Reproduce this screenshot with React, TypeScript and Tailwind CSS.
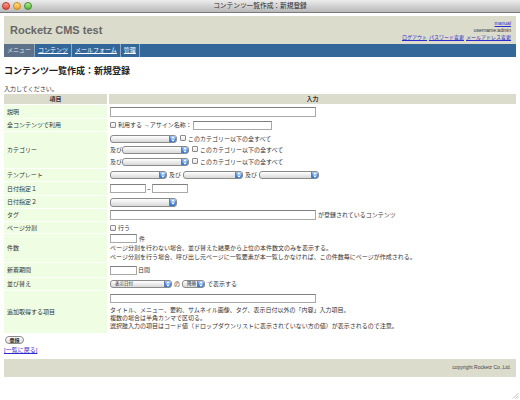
import React from "react";

const jp = "font-['Liberation_Sans','Noto_Sans_CJK_JP',sans-serif]";

function Arrows() {
  return (
    <svg width="4" height="6" viewBox="0 0 4 6">
      <path d="M0 2.4 L2 0.3 L4 2.4 Z M0 3.6 L2 5.7 L4 3.6 Z" fill="#fff" />
    </svg>
  );
}

function Select({ className, label }: { className: string; label?: string }) {
  return (
    <span
      className={`inline-flex h-[8px] items-stretch overflow-hidden rounded-[3px] border border-[#8a8a8a] bg-gradient-to-b from-white to-[#d8d8d8] ${className}`}
    >
      <span className="flex flex-1 items-center pl-[4px] text-[4.5px] leading-none text-[#222]">{label}</span>
      <span className="flex w-[7px] items-center justify-center border-l border-[#5a7fb8] bg-gradient-to-b from-[#a9cdf7] via-[#4b8be0] to-[#2d6fd2]">
        <Arrows />
      </span>
    </span>
  );
}

function Check() {
  return (
    <span className="inline-block h-[6px] w-[6px] rounded-[1px] border border-[#8a8a8a] bg-gradient-to-b from-white to-[#e4e4e4]" />
  );
}

function Input({ className }: { className: string }) {
  return (
    <span
      className={`inline-block border border-[#a8a8a8] border-t-[#7e7e7e] bg-white ${className}`}
    />
  );
}

function Row({ label, h, children }: { label: string; h: string; children: React.ReactNode }) {
  return (
    <>
      <div className={`flex items-center bg-[#effde3] pl-[3px] text-[#333] ${h}`}>{label}</div>
      <div className={`flex items-center bg-white pl-[1px] ${h}`}>{children}</div>
    </>
  );
}

function CatLine({ first }: { first?: boolean }) {
  return (
    <div className="flex h-[11.5px] items-center">
      {!first && <span className="w-[12px]">及び</span>}
      <Select className="w-[67px]" />
      <span className="ml-[3px]">
        <Check />
      </span>
      <span className="ml-[2px]">このカテゴリー以下の全すべて</span>
    </div>
  );
}

export default function App() {
  return (
    <div className={`relative h-[400px] w-[520px] overflow-hidden bg-white ${jp}`}>
      {/* window title bar */}
      <div className="relative flex h-[13px] items-center border-b border-[#7a7a7a] bg-gradient-to-b from-[#ececec] to-[#b9b9b9]">
        <div className="absolute left-[2px] top-[2px] flex gap-[3px]">
          <span className="h-[8px] w-[8px] rounded-full border border-[#b3362f] bg-gradient-to-b from-[#ff9d90] to-[#e0443a]" />
          <span className="h-[8px] w-[8px] rounded-full border border-[#c98a17] bg-gradient-to-b from-[#ffe08a] to-[#f0a51e]" />
          <span className="h-[8px] w-[8px] rounded-full border border-[#3f8a2a] bg-gradient-to-b from-[#b6ee90] to-[#4cb536]" />
        </div>
        <div className="flex-1 text-center text-[6.7px] leading-none text-[#2a2a2a]">コンテンツ一覧作成：新規登録</div>
      </div>

      <div className="px-[4px] pt-[3px]">
        {/* site header */}
        <div className="flex h-[28px] items-center justify-between bg-[#dcdccc] pl-[6px] pr-[5px]">
          <div className="text-[11px] font-bold text-[#666]">Rocketz CMS test</div>
          <div className="flex flex-col items-end text-[5px] leading-[7px] text-[#333]">
            <span className="text-[#2a2ad0] underline">manual</span>
            <span>username:admin</span>
            <span className="flex gap-[2px] text-[#2a2ad0] underline">
              <span>ログアウト</span>
              <span>パスワード変更</span>
              <span>メールアドレス変更</span>
            </span>
          </div>
        </div>

        {/* nav */}
        <div className="flex h-[13px] items-stretch bg-[#336699] text-[6px] text-white">
          <span className="flex items-center border-r border-[#8fa9c4] bg-[#5d7288] px-[3px] text-[#dfe6ee]">メニュー</span>
          <span className="flex items-center border-r border-[#8fa9c4] px-[3px] underline">コンテンツ</span>
          <span className="flex items-center border-r border-[#8fa9c4] px-[3px] underline">メールフォーム</span>
          <span className="flex items-center border-r border-[#8fa9c4] px-[3px] underline">管理</span>
        </div>

        <h1 className="mt-[8px] text-[9px] font-bold leading-[12px] text-[#222]">コンテンツ一覧作成：新規登録</h1>
        <p className="mt-[8px] text-[6px] leading-[8px] text-[#333]">入力してください。</p>

        {/* form table */}
        <div className="mt-[1px] grid grid-cols-[103px_407px] gap-x-[2px] gap-y-[1px] text-[6px] leading-[8px] text-[#333]">
          <div className="flex h-[10px] items-center justify-center bg-[#dcdccc] font-bold">項目</div>
          <div className="flex h-[10px] items-center justify-center bg-[#dcdccc] font-bold">入力</div>

          <Row label="説明" h="h-[13px]">
            <Input className="h-[10px] w-[206px]" />
          </Row>

          <Row label="全コンテンツで利用" h="h-[12px]">
            <Check />
            <span className="ml-[2px]">利用する →アサイン名称：</span>
            <Input className="ml-[1px] h-[9px] w-[79px]" />
          </Row>

          <Row label="カテゴリー" h="h-[36px]">
            <div className="flex flex-col">
              <CatLine first />
              <CatLine />
              <CatLine />
            </div>
          </Row>

          <Row label="テンプレート" h="h-[12px]">
            <Select className="w-[57px]" />
            <span className="mx-[2px]">及び</span>
            <Select className="w-[60px]" />
            <span className="mx-[2px]">及び</span>
            <Select className="w-[60px]" />
          </Row>

          <Row label="日付指定１" h="h-[13px]">
            <Input className="h-[9px] w-[36px]" />
            <span className="px-[1px]">~</span>
            <Input className="h-[9px] w-[36px]" />
          </Row>

          <Row label="日付指定２" h="h-[12px]">
            <Select className="h-[9px] w-[67px]" />
          </Row>

          <Row label="タグ" h="h-[12px]">
            <Input className="h-[10px] w-[206px]" />
            <span className="ml-[2px]">が登録されているコンテンツ</span>
          </Row>

          <Row label="ページ分割" h="h-[11px]">
            <Check />
            <span className="ml-[2px]">行う</span>
          </Row>

          <Row label="件数" h="h-[28px]">
            <div className="flex flex-col">
              <div className="flex items-center">
                <Input className="h-[9px] w-[27px]" />
                <span className="ml-[2px]">件</span>
              </div>
              <span className="mt-[0.5px] leading-[9px]">ページ分割を行わない場合、並び替えた結果から上位の本件数文のみを表示する。</span>
              <span className="leading-[9px]">ページ分割を行う場合、呼び出し元ページに一覧要素が本一覧しかなければ、この件数毎にページが作成される。</span>
            </div>
          </Row>

          <Row label="新着期間" h="h-[14px]">
            <Input className="h-[9px] w-[27px]" />
            <span className="ml-[1px]">日間</span>
          </Row>

          <Row label="並び替え" h="h-[12px]">
            <Select className="w-[62px]" label="表示日付" />
            <span className="mx-[2px]">の</span>
            <Select className="w-[23px]" label="降順" />
            <span className="ml-[2px]">で表示する</span>
          </Row>

          <Row label="追加取得する項目" h="h-[42px]">
            <div className="flex flex-col">
              <Input className="h-[9px] w-[206px]" />
              <span className="mt-[3px]">タイトル、メニュー、要約、サムネイル画像、タグ、表示日付以外の「内容」入力項目。</span>
              <span>複数の場合は半角カンマで区切る。</span>
              <span>選択肢入力の項目はコード値（ドロップダウンリストに表示されていない方の値）が表示されるので注意。</span>
            </div>
          </Row>
        </div>

        <div className="mt-[3px] flex pl-[1px]">
          <span className="flex h-[8px] w-[19px] items-center justify-center rounded-full border border-[#8a8a8a] bg-gradient-to-b from-white to-[#dcdcdc] text-[5px] font-bold leading-none text-[#222]">
            登録
          </span>
        </div>
        <div className="mt-[2px] text-[6px] leading-[8px] text-[#2a2ad0] underline">[一覧に戻る]</div>

        {/* footer */}
        <div className="mt-[5px] flex h-[18px] items-center justify-end bg-[#dcdccc] pr-[5px] text-[5px] text-[#444]">
          copyright Rocketz Co.,Ltd.
        </div>
      </div>

      {/* resize grip */}
      <svg className="absolute bottom-[1px] right-[1px]" width="7" height="7" viewBox="0 0 7 7">
        <path d="M6.5 1 L1 6.5 M6.5 3.5 L3.5 6.5 M6.5 5.5 L5.5 6.5" stroke="#999" strokeWidth="0.6" />
      </svg>
    </div>
  );
}
